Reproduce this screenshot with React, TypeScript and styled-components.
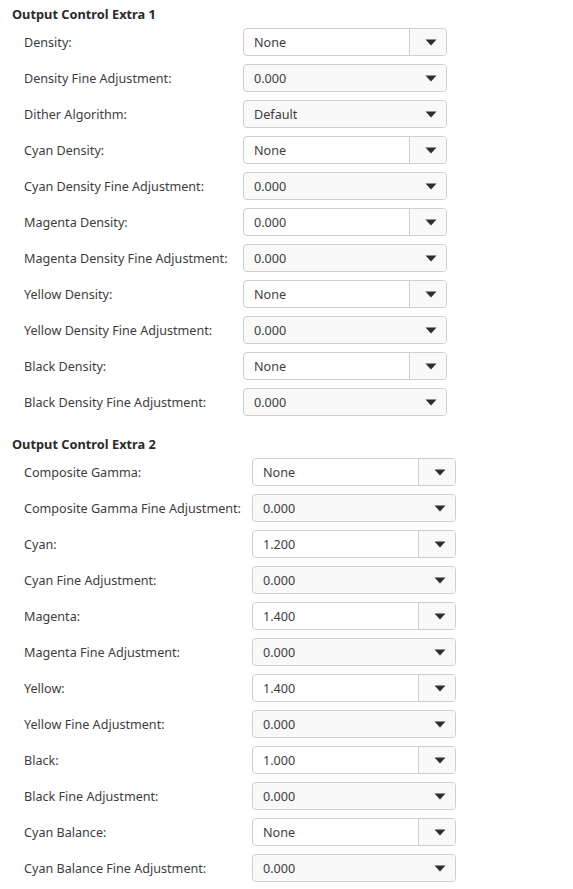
import React from "react";
import styled, { createGlobalStyle } from "styled-components";

const Global = createGlobalStyle`
  html, body { margin: 0; padding: 0; background: #ffffff; }
  body { font-family: "Noto Sans", "Open Sans", sans-serif; color: #3d3d3d; }
`;

const Page = styled.div`
  display: flex;
  flex-direction: column;
  gap: 18px;
  padding: 4px 0 0 12px;
`;

const Section = styled.section`
  display: flex;
  flex-direction: column;
`;

const Heading = styled.h2`
  margin: 0 0 4px 0;
  font-size: 12.8px;
  line-height: 20px;
  font-weight: 700;
  color: #2a2a2a;
`;

const Rows = styled.div<{ $labelWidth: number }>`
  display: grid;
  grid-template-columns: ${(p) => p.$labelWidth}px 204px;
  row-gap: 8px;
  padding-left: 12px;
`;

const Label = styled.span`
  font-size: 12.6px;
  line-height: 26px;
  padding-top: 2px;
  white-space: nowrap;
`;

const Box = styled.div<{ $entry: boolean }>`
  box-sizing: border-box;
  height: 28px;
  display: flex;
  align-items: stretch;
  border: 1px solid #d3cec9;
  border-radius: 4px;
  background: ${(p) => (p.$entry ? "#ffffff" : "#f9f9f9")};
  overflow: hidden;
`;

const Value = styled.span`
  flex: 1;
  padding: 1px 0 0 10px;
  font-size: 12.6px;
  line-height: 25px;
  color: #3d3d3d;
`;

const ArrowButton = styled.span<{ $entry: boolean }>`
  box-sizing: border-box;
  width: 37px;
  padding-left: 5px;
  display: flex;
  align-items: center;
  justify-content: center;
  background: #f9f9f9;
  border-left: ${(p) => (p.$entry ? "1px solid #d3cec9" : "1px solid transparent")};
`;

const Arrow = () => (
  <svg width="12" height="7" viewBox="0 0 12 7">
    <path d="M0.5 0.5 H11.5 L6 6.5 Z" fill="#2e2e2e" />
  </svg>
);

type Item = { label: string; value: string; entry: boolean };

const Combo = ({ value, entry }: { value: string; entry: boolean }) => (
  <Box $entry={entry}>
    <Value>{value}</Value>
    <ArrowButton $entry={entry}>
      <Arrow />
    </ArrowButton>
  </Box>
);

const section1: Item[] = [
  { label: "Density:", value: "None", entry: true },
  { label: "Density Fine Adjustment:", value: "0.000", entry: false },
  { label: "Dither Algorithm:", value: "Default", entry: false },
  { label: "Cyan Density:", value: "None", entry: true },
  { label: "Cyan Density Fine Adjustment:", value: "0.000", entry: false },
  { label: "Magenta Density:", value: "0.000", entry: true },
  { label: "Magenta Density Fine Adjustment:", value: "0.000", entry: false },
  { label: "Yellow Density:", value: "None", entry: true },
  { label: "Yellow Density Fine Adjustment:", value: "0.000", entry: false },
  { label: "Black Density:", value: "None", entry: true },
  { label: "Black Density Fine Adjustment:", value: "0.000", entry: false },
];

const section2: Item[] = [
  { label: "Composite Gamma:", value: "None", entry: true },
  { label: "Composite Gamma Fine Adjustment:", value: "0.000", entry: false },
  { label: "Cyan:", value: "1.200", entry: true },
  { label: "Cyan Fine Adjustment:", value: "0.000", entry: false },
  { label: "Magenta:", value: "1.400", entry: true },
  { label: "Magenta Fine Adjustment:", value: "0.000", entry: false },
  { label: "Yellow:", value: "1.400", entry: true },
  { label: "Yellow Fine Adjustment:", value: "0.000", entry: false },
  { label: "Black:", value: "1.000", entry: true },
  { label: "Black Fine Adjustment:", value: "0.000", entry: false },
  { label: "Cyan Balance:", value: "None", entry: true },
  { label: "Cyan Balance Fine Adjustment:", value: "0.000", entry: false },
];

const Group = ({ title, items, labelWidth }: { title: string; items: Item[]; labelWidth: number }) => (
  <Section>
    <Heading>{title}</Heading>
    <Rows $labelWidth={labelWidth}>
      {items.map((it) => (
        <React.Fragment key={it.label}>
          <Label>{it.label}</Label>
          <Combo value={it.value} entry={it.entry} />
        </React.Fragment>
      ))}
    </Rows>
  </Section>
);

export default function App() {
  return (
    <>
      <Global />
      <Page>
        <Group title="Output Control Extra 1" items={section1} labelWidth={219} />
        <Group title="Output Control Extra 2" items={section2} labelWidth={228} />
      </Page>
    </>
  );
}
